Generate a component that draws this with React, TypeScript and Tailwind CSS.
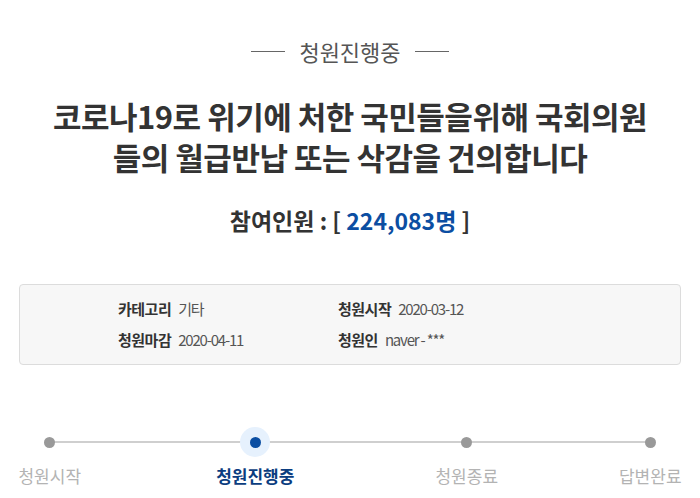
import React from "react";

const font = { fontFamily: '"Noto Sans CJK KR", "Noto Sans", sans-serif' };

const steps = [
  { label: "청원시작", active: false, ml: "ml-0" },
  { label: "청원진행중", active: true, ml: "ml-[106px]" },
  { label: "청원종료", active: false, ml: "ml-[112px]" },
  { label: "답변완료", active: false, ml: "ml-[84px]" },
];

function InfoItem({ label, value, w }: { label: string; value: string; w: string }) {
  return (
    <div className={`flex items-center ${w}`}>
      <span className="font-bold tracking-[-0.5px] text-[#333]">{label}</span>
      <span className="ml-[7px] tracking-[-1.2px] text-[#555]">{value}</span>
    </div>
  );
}

export default function App() {
  return (
    <div className="min-h-screen w-[700px] bg-white" style={font}>
      {/* status label */}
      <div className="flex items-center justify-center gap-[14px] pt-[36px] text-[22px] leading-[30px] text-[#555]">
        <span className="h-px w-[34px] bg-[#666]" />
        <span>청원진행중</span>
        <span className="h-px w-[34px] bg-[#666]" />
      </div>

      <h1 className="mt-[29px] flex flex-col items-center text-[31px] font-bold leading-[41px] tracking-[-0.5px] text-[#333]">
        <span>코로나19로 위기에 처한 국민들을위해 국회의원</span>
        <span>들의 월급반납 또는 삭감을 건의합니다</span>
      </h1>

      <div className="mt-[27px] text-center text-[23px] font-bold leading-[32px] text-[#333]">
        참여인원 : [ <span className="text-[#0b4ea2]">224,083명</span> ]
      </div>

      <div className="mx-[19px] mt-[48px] flex h-[81px] flex-col justify-center gap-[9px] rounded-[4px] border border-[#dcdcdc] bg-[#f7f7f7] pl-[98px] text-[15px] leading-[22px]">
        <div className="flex">
          <InfoItem label="카테고리" value="기타" w="w-[220px]" />
          <InfoItem label="청원시작" value="2020-03-12" w="w-[220px]" />
        </div>
        <div className="flex">
          <InfoItem label="청원마감" value="2020-04-11" w="w-[220px]" />
          <InfoItem label="청원인" value="naver - ***" w="w-[220px]" />
        </div>
      </div>

      {/* progress steps */}
      <div className="relative mt-[61px]">
        <div className="absolute left-[49px] right-[49px] top-[15px] h-[2px] bg-[#cfcfcf]" />
        <div className="relative flex">
          {steps.map((s) => (
            <div key={s.label} className={`flex w-[100px] flex-col items-center ${s.ml}`}>
              <div className="flex h-[32px] w-[32px] items-center justify-center">
                {s.active ? (
                  <div className="flex h-[30px] w-[30px] items-center justify-center rounded-full bg-[#e6f1fd]">
                    <div className="h-[11px] w-[11px] rounded-full bg-[#0b4ea2]" />
                  </div>
                ) : (
                  <div className="h-[11px] w-[11px] rounded-full bg-[#999]" />
                )}
              </div>
              <div
                className={`mt-[6px] whitespace-nowrap text-[17px] leading-[24px] ${
                  s.active ? "font-bold text-[#0b3d80]" : "text-[#b3b3b3]"
                }`}
              >
                {s.label}
              </div>
            </div>
          ))}
        </div>
      </div>
    </div>
  );
}
